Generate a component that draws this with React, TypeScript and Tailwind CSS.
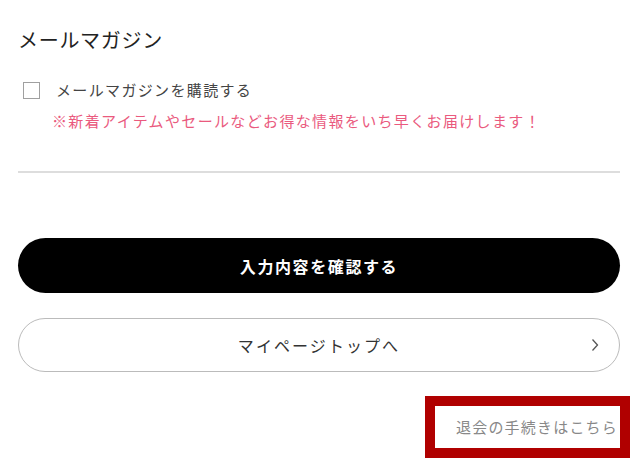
import React from 'react';

const font = { fontFamily: '"Noto Sans CJK JP", "Noto Sans", sans-serif' };

export default function App() {
  return (
    <div className="min-h-[472px] w-[638px] bg-white px-[18px] pt-[25px]" style={font}>
      {/* Newsletter */}
      <h2 className="text-[20px] leading-[30px] text-[#222] tracking-[0.035em]">メールマガジン</h2>

      <label className="mt-[23px] flex items-center">
        <span className="ml-[5px] h-[17px] w-[17px] border border-[#a0a0a0] bg-white" />
        <span className="ml-[16px] text-[15px] leading-[24px] tracking-[0.09em] text-[#444]">
          メールマガジンを購読する
        </span>
      </label>
      <p className="mt-[7px] ml-[34px] text-[15px] leading-[24px] tracking-[0.09em] text-[#ea5a7e]">
        ※新着アイテムやセールなどお得な情報をいち早くお届けします！
      </p>

      <div className="mt-[38px] h-[2px] bg-[#dddddd]" />

      {/* Buttons */}
      <button className="mt-[65px] flex h-[55px] w-full items-center justify-center rounded-full bg-black text-[16px] font-bold tracking-[0.1em] text-white">
        入力内容を確認する
      </button>

      <button className="relative mt-[25px] flex h-[54px] w-full items-center justify-center rounded-full border border-[#bbbbbb] bg-white text-[16px] tracking-[0.13em] text-[#333]">
        マイページトップへ
        <svg className="absolute right-[20px] top-1/2 -translate-y-1/2" width="8" height="14" viewBox="0 0 8 14">
          <path d="M1.5 1.5 L6.5 7 L1.5 12.5" fill="none" stroke="#555" strokeWidth="1.3" />
        </svg>
      </button>

      {/* Withdrawal link */}
      <div className="mt-[24px] flex justify-end">
        <div className="mr-[-10px] flex h-[62px] w-[205px] items-center justify-end border-[10px] border-[#b00000] pr-[2px]">
          <a className="text-[15px] leading-[24px] tracking-[0.08em] text-[#888]">退会の手続きはこちら</a>
        </div>
      </div>
    </div>
  );
}
